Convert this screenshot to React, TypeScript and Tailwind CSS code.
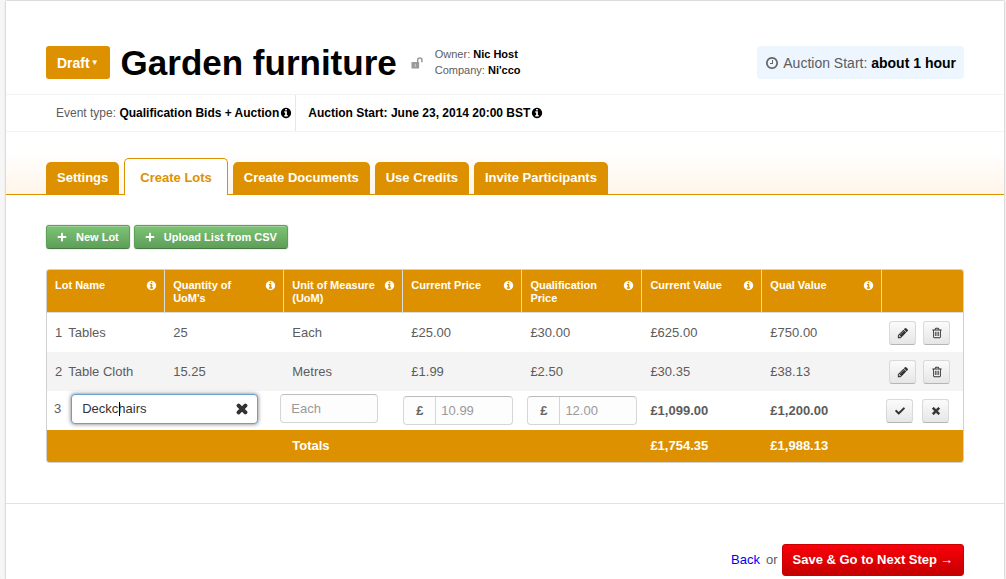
import { useState, type ReactNode } from "react";
import { FaCheck, FaPlus, FaTimes } from "react-icons/fa";

const tabs = ["Settings", "Create Lots", "Create Documents", "Use Credits", "Invite Participants"];

const columns = [
  { title: "Lot Name", width: "w-[12.9%]" },
  { title: "Quantity of UoM's", width: "w-[13%]" },
  { title: "Unit of Measure (UoM)", width: "w-[13%]" },
  { title: "Current Price", width: "w-[13%]" },
  { title: "Qualification Price", width: "w-[13.1%]" },
  { title: "Current Value", width: "w-[13.1%]" },
  { title: "Qual Value", width: "w-[13.1%]" },
];

const lots = [
  { name: "Tables", quantity: "25", unit: "Each", price: "£25.00", qualPrice: "£30.00", value: "£625.00", qualValue: "£750.00" },
  { name: "Table Cloth", quantity: "15.25", unit: "Metres", price: "£1.99", qualPrice: "£2.50", value: "£30.35", qualValue: "£38.13" },
];

const ring = "q0 209-103 385.5t-279.5 279.5-385.5 103-385.5-103-279.5-279.5-103-385.5 103-385.5 279.5-279.5 385.5-103 385.5 103 279.5 279.5 103 385.5z";

const icons = {
  info: "M1152 1376v-160q0-14-9-23t-23-9h-96v-512q0-14-9-23t-23-9h-320q-14 0-23 9t-9 23v160q0 14 9 23t23 9h96v320h-96q-14 0-23 9t-9 23v160q0 14 9 23t23 9h448q14 0 23-9t9-23zm-128-896v-160q0-14-9-23t-23-9h-192q-14 0-23 9t-9 23v160q0 14 9 23t23 9h192q14 0 23-9t9-23zm640 416" + ring,
  clock: "M1024 544v448q0 14-9 23t-23 9h-320q-14 0-23-9t-9-23v-64q0-14 9-23t23-9h224v-352q0-14 9-23t23-9h64q14 0 23 9t9 23zm416 352q0-148-73-273t-198-198-273-73-273 73-198 198-73 273 73 273 198 198 273 73 273-73 198-198 73-273zm224 0" + ring,
  pencil: "M491 1536l91-91-235-235-91 91v107h128v128h107zm523-928q0-22-22-22-10 0-17 7l-542 542q-7 7-7 17 0 22 22 22 10 0 17-7l542-542q7-7 7-17zm-54-192l416 416-832 832h-416v-416zm683 96q0 53-37 90l-166 166-416-416 166-165q36-38 90-38 53 0 91 38l235 234q37 39 37 91z",
  trash: "M704 736v576q0 14-9 23t-23 9h-64q-14 0-23-9t-9-23v-576q0-14 9-23t23-9h64q14 0 23 9t9 23zm256 0v576q0 14-9 23t-23 9h-64q-14 0-23-9t-9-23v-576q0-14 9-23t23-9h64q14 0 23 9t9 23zm256 0v576q0 14-9 23t-23 9h-64q-14 0-23-9t-9-23v-576q0-14 9-23t23-9h64q14 0 23 9t9 23zm128 724v-948h-896v948q0 22 7 40.5t14.5 27 10.5 8.5h832q3 0 10.5-8.5t14.5-27 7-40.5zm-672-1076h448l-48-117q-7-9-17-11h-317q-10 2-17 11zm928 32v64q0 14-9 23t-23 9h-96v948q0 83-47 143.5t-113 60.5h-832q-66 0-113-58.5t-47-141.5v-952h-96q-14 0-23-9t-9-23v-64q0-14 9-23t23-9h309l70-167q15-37 54-63t79-26h320q40 0 79 26t54 63l70 167h309q14 0 23 9t9 23z",
};

function Icon({ name, className }: { name: keyof typeof icons; className: string }) {
  return (
    <svg viewBox="0 0 1792 1792" fill="currentColor" aria-hidden="true" className={className}>
      <path d={icons[name]} />
    </svg>
  );
}

function UnlockIcon() {
  return (
    <svg viewBox="0 0 12 12" aria-hidden="true" className="ml-3.5 size-3 text-[#999]">
      <path d="M6.7 6V3a2.1 2.1 0 0 1 4.2 0V5.2" fill="none" stroke="currentColor" strokeWidth="1.5" />
      <rect x="0.5" y="5" width="7.6" height="6.6" rx="0.5" fill="currentColor" />
      <path d="M4.3 6.8v3" stroke="white" strokeWidth="0.9" opacity="0.6" />
    </svg>
  );
}

function GreenButton({ children }: { children: ReactNode }) {
  return (
    <button
      type="button"
      className="flex h-6 items-center gap-[9px] rounded-[3px] border border-[#5f9f5a] border-b-[#447a40] bg-linear-to-b from-[#7cc474] to-[#5f9e5a] px-2.5 text-[11px] font-bold text-white shadow-[inset_0_1px_0_rgba(255,255,255,0.25),0_0_0_1px_rgba(0,0,0,0.06)]"
    >
      <FaPlus className="size-2.5" />
      <span>{children}</span>
    </button>
  );
}

function IconButton({ label, children }: { label: string; children: ReactNode }) {
  return (
    <button
      type="button"
      aria-label={label}
      className="flex h-6 w-[27px] items-center justify-center rounded-[3px] border border-[#d9d9d9] border-b-[#b5b5b5] bg-linear-to-b from-[#fbfbfb] to-[#e6e6e6] text-[10px] text-[#333]"
    >
      {children}
    </button>
  );
}

function PriceInput({ label, value }: { label: string; value: string }) {
  return (
    <label className="flex h-[29px] w-[110px] items-stretch rounded-[4px] border border-[#d6d6d6] border-t-[#bdbdbd] bg-[#fdfdfd]">
      <span className="flex w-8 shrink-0 items-center justify-center border-r border-[#d6d6d6] font-bold text-[#666]">£</span>
      <input aria-label={label} defaultValue={value} className="w-full min-w-0 bg-transparent px-[5px] text-[#999] outline-none" />
    </label>
  );
}

export default function App() {
  const [lotName, setLotName] = useState("Deckchairs");

  return (
    <div className="min-h-screen bg-[#f6f6f6] pt-px pr-0.5 pl-1.5 font-['Liberation_Sans',Arial,sans-serif] text-[13px] leading-4 text-[#5c5c5c]">
      <main className="min-h-[calc(100vh-1px)] bg-white pb-[3px] shadow-[0_0_2px_rgba(0,0,0,0.35)]">
        <header className="flex items-center px-10 pt-[45px] pb-[15px]">
          <button type="button" className="flex h-[33px] items-center gap-px rounded-[3px] bg-[#dd9100] px-[11px] text-sm font-bold text-white">
            Draft
            <span className="text-[8px]">▼</span>
          </button>
          <h1 className="ml-[11px] text-[35px] leading-[33px] font-bold text-black">Garden furniture</h1>
          <UnlockIcon />
          <div className="ml-3 self-start text-[11px]">
            <p>Owner: <b className="text-black">Nic Host</b></p>
            <p>Company: <b className="text-black">Ni'cco</b></p>
          </div>
          <div className="ml-auto flex h-[33px] items-center gap-1 rounded-[4px] bg-[#edf6ff] px-2 text-sm">
            <Icon name="clock" className="size-3.5 text-[#666]" />
            <span>Auction Start: <b className="text-black">about 1 hour</b></span>
          </div>
        </header>

        <section className="flex h-[38px] items-stretch border-y border-[#f3f3f3] pl-10 text-xs">
          <p className="flex items-center gap-px border-r border-[#e8e8e8] pr-[3px] pl-2.5">
            <span>Event type: <b className="text-black">Qualification Bids + Auction</b></span>
            <Icon name="info" className="size-3 text-black" />
          </p>
          <p className="flex items-center gap-px px-3 font-bold text-black">
            Auction Start: June 23, 2014 20:00 BST
            <Icon name="info" className="size-3" />
          </p>
        </section>

        <nav className="border-b border-[#dd9100] bg-linear-to-b from-white from-30% to-[#fff5e9] px-10 pt-[26px]">
          <ul className="flex items-end gap-[5px]">
            {tabs.map((tab) => (
              <li key={tab} className="flex">
                <a
                  href="#"
                  className={
                    tab === "Create Lots"
                      ? "-mb-px flex h-[37px] items-center rounded-t-[5px] border border-b-0 border-[#dd9100] bg-white px-[15px] pt-0.5 font-bold text-[#dd9100]"
                      : "flex h-8 items-center rounded-t-[5px] bg-[#dd9100] px-[11px] font-bold text-white"
                  }
                >
                  {tab}
                </a>
              </li>
            ))}
          </ul>
        </nav>

        <section className="px-10 pt-[30px] pb-10">
          <div className="flex gap-1">
            <GreenButton>New Lot</GreenButton>
            <GreenButton>Upload List from CSV</GreenButton>
          </div>

          <div className="mt-5 overflow-hidden rounded-[3px] border border-[#d0d0d0]">
            <table className="w-full table-fixed border-separate border-spacing-0 text-left">
              <colgroup>
                {columns.map((column) => (
                  <col key={column.title} className={column.width} />
                ))}
                <col />
              </colgroup>
              <thead>
                <tr className="h-[43px] bg-[#dd9100] align-top text-[11px] leading-[13px] text-white">
                  {columns.map((column) => (
                    <th key={column.title} scope="col" className="border-r border-b border-[#dcdcdc] px-[7px] pt-[9px] pb-[7px] font-bold">
                      <span className="flex justify-between gap-0.5 pl-px">
                        <span>{column.title}</span>
                        <Icon name="info" className="mt-px size-[11px] shrink-0" />
                      </span>
                    </th>
                  ))}
                  <td className="border-b border-[#dcdcdc]" />
                </tr>
              </thead>
              <tbody>
                {lots.map((lot, index) => (
                  <tr key={lot.name} className="h-[39px] even:bg-[#f4f4f4]">
                    <td className="px-2">
                      <span className="flex gap-1.5">
                        <span>{index + 1}</span>
                        <span>{lot.name}</span>
                      </span>
                    </td>
                    <td className="px-2">{lot.quantity}</td>
                    <td className="px-2">{lot.unit}</td>
                    <td className="px-2">{lot.price}</td>
                    <td className="px-2">{lot.qualPrice}</td>
                    <td className="px-2">{lot.value}</td>
                    <td className="px-2">{lot.qualValue}</td>
                    <td className="px-[7px]">
                      <span className="flex gap-[7px]">
                        <IconButton label={`Edit ${lot.name}`}><Icon name="pencil" className="size-3" /></IconButton>
                        <IconButton label={`Delete ${lot.name}`}><Icon name="trash" className="size-3" /></IconButton>
                      </span>
                    </td>
                  </tr>
                ))}
                <tr className="h-[39px]">
                  <td colSpan={2} className="py-0 pl-[7px]">
                    <span className="mb-1 flex items-center gap-2.5">
                      <span>3</span>
                      <span className="relative flex h-[30px] w-[187px] items-center rounded-[4px] border border-[#67a0cc] bg-white pr-2 shadow-[0_0_4px_rgba(0,0,0,0.55)]">
                        <input
                          aria-label="Lot name"
                          value={lotName}
                          onChange={(event) => setLotName(event.target.value)}
                          className="w-full min-w-0 bg-transparent pl-2.5 text-[#333] outline-none"
                        />
                        <button type="button" aria-label="Clear lot name" onClick={() => setLotName("")} className="text-sm text-[#333]">
                          <FaTimes strokeWidth={50} stroke="currentColor" />
                        </button>
                        <span className="absolute top-[7px] left-[47px] h-3.5 w-px bg-black" />
                      </span>
                    </span>
                  </td>
                  <td className="py-0">
                    <input
                      aria-label="Unit of measure"
                      defaultValue="Each"
                      className="mb-1 ml-[-4px] block h-[29px] w-[98px] rounded-[4px] border border-[#d6d6d6] border-t-[#bdbdbd] bg-[#fdfdfd] px-2.5 text-[#999] outline-none"
                    />
                  </td>
                  <td className="py-0"><PriceInput label="Current price" value="10.99" /></td>
                  <td className="py-0 pl-[5px]"><PriceInput label="Qualification price" value="12.00" /></td>
                  <td className="px-2 font-bold">£1,099.00</td>
                  <td className="px-2 font-bold">£1,200.00</td>
                  <td className="px-1">
                    <span className="flex gap-[9px]">
                      <IconButton label="Save lot"><FaCheck /></IconButton>
                      <IconButton label="Cancel editing"><FaTimes strokeWidth={50} stroke="currentColor" /></IconButton>
                    </span>
                  </td>
                </tr>
              </tbody>
              <tfoot>
                <tr className="h-8 bg-[#dd9100] font-bold text-white">
                  <td colSpan={2} />
                  <th scope="row" className="px-2">Totals</th>
                  <td colSpan={2} />
                  <td className="px-2">£1,754.35</td>
                  <td className="px-2">£1,988.13</td>
                  <td />
                </tr>
              </tfoot>
            </table>
          </div>
        </section>

        <footer className="flex items-center justify-end border-t border-[#e2e2e2] px-10 pt-10">
          <a href="#" className="text-[#0000ee]">Back</a>
          <span className="mr-1 ml-1.5">or</span>
          <button type="button" className="flex h-8 items-center gap-[3px] rounded-[3px] border border-[#c80000] bg-linear-to-b from-[#fb000c] to-[#c40000] px-2.5 font-bold text-white">
            Save &amp; Go to Next Step
            <span>→</span>
          </button>
        </footer>
      </main>
    </div>
  );
}
